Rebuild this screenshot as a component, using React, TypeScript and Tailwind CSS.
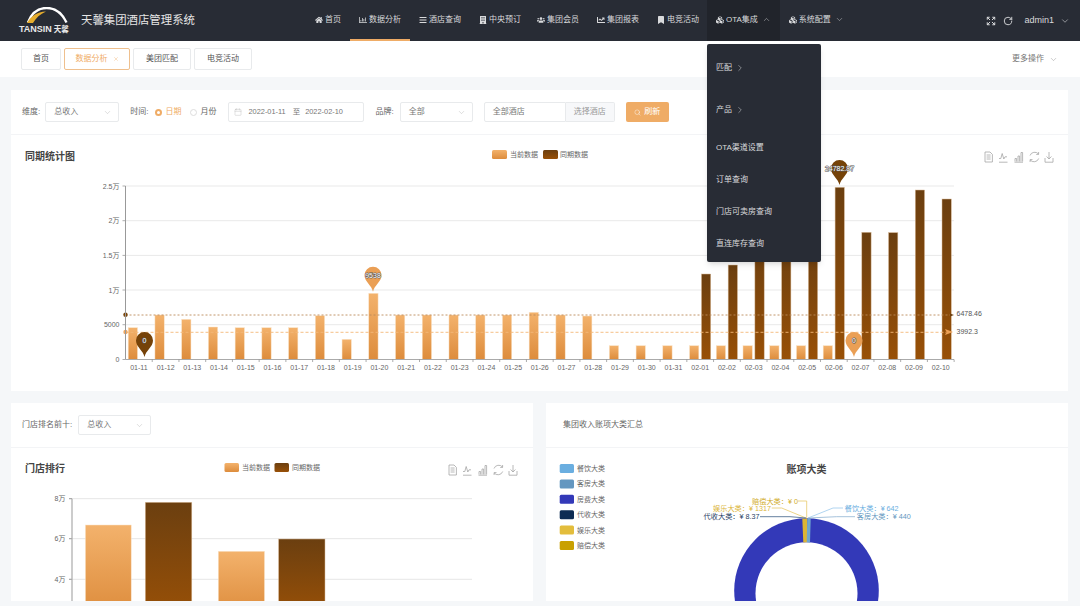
import React from "react";
import { ChevronDown, ChevronRight, ChevronUp, Search, Calendar, Expand, RotateCw, X } from "lucide-react";
import { FaHome, FaBars, FaBuilding, FaUsers, FaBookmark, FaCubes, FaRegChartBar, FaChartLine } from "react-icons/fa";

const navItems = [
  { label: "首页", icon: <FaHome />, pr: "pr-[9px]" },
  { label: "数据分析", icon: <FaRegChartBar />, active: true, pr: "pr-[9px]" },
  { label: "酒店查询", icon: <FaBars />, pr: "pr-[9px]" },
  { label: "中央预订", icon: <FaBuilding />, pr: "pr-[7px]" },
  { label: "集团会员", icon: <FaUsers />, pr: "pr-[9px]" },
  { label: "集团报表", icon: <FaChartLine />, pr: "pr-[9px]" },
  { label: "电竞活动", icon: <FaBookmark />, pr: "pr-[8px]" },
  { label: "OTA集成", icon: <FaCubes />, open: true, pr: "pr-[9px]" },
  { label: "系统配置", icon: <FaCubes />, caret: true, pr: "pr-[9px]" },
];

const days = [
  "01-11", "01-12", "01-13", "01-14", "01-15", "01-16", "01-17", "01-18", "01-19", "01-20", "01-21",
  "01-22", "01-23", "01-24", "01-25", "01-26", "01-27", "01-28", "01-29", "01-30", "01-31", "02-01",
  "02-02", "02-03", "02-04", "02-05", "02-06", "02-07", "02-08", "02-09", "02-10",
];

// y position of each bar top, in page pixels
const currentTops = [327.7, 315, 319.3, 327, 327.7, 327.7, 327.7, 315.7, 339.3, 293.3, 315, 315, 315, 315, 315, 312.3, 315, 316, 345.7, 345.7, 345.7, 345.7, 345.7, 345.7, 345.7, 345.7, 345.7];
const lastTops: Record<number, number> = { 21: 274, 22: 265, 23: 240, 24: 240, 25: 240, 26: 187.3, 27: 232.3, 28: 232.6, 29: 190, 30: 199 };

const axisLeft = 125.5;
const step = 26.73;
const baseY = 359.5;

const Select = ({ value, className }: { value: string; className: string }) => (
  <div className={`flex h-[20px] items-center justify-between rounded-[2px] border border-[#e8eaec] bg-white pl-[8px] pr-[6px] text-[#777] ${className}`}>
    <span>{value}</span>
    <ChevronDown size={9} strokeWidth={1} className="text-[#aaa]" />
  </div>
);

const Tools = ({ x, y }: { x: number; y: number }) => (
  <g transform={`translate(${x} ${y})`} fill="none" stroke="#a6a6a6" strokeWidth="0.8">
    <path d="M0 -5h5l2.4 2.4V5H0zM1.6 -2h4M1.6 0h4M1.6 2h4" />
    <path d="M14 5.2h8.5M14 1.5h1.8l1.4 -5 1.6 5.5 1.2 -2.2h2" />
    <path d="M29.5 5.2h8.5M30 4.5v-3h1.6v3M33 4.5v-5.5h1.6v5.5M36 4.5v-9h1.6v9" />
    <path d="M45 -1.5a5 5 0 0 1 8.6 -1.4M53.7 1.5a5 5 0 0 1 -8.6 1.4M53.6 -5v2.4h-2.4M45.1 5v-2.4h2.4" />
    <path d="M60 1v4.2h8V1M64 -5v7M61.6 -0.5 64 2l2.4 -2.5" />
  </g>
);

const Pin = ({ x, tip, fill, label }: { x: number; tip: number; fill: string; label: string }) => (
  <g>
    <path
      d={`M${x} ${tip}C${x - 1.2} ${tip - 6.5} ${x - 8.5} ${tip - 10} ${x - 8.5} ${tip - 16.5}a8.5 8.5 0 0 1 17 0C${x + 8.5} ${tip - 10} ${x + 1.2} ${tip - 6.5} ${x} ${tip}z`}
      fill={fill}
    />
    <text x={x} y={tip - 14} textAnchor="middle" fontSize="7" fill="#fff" stroke="#555" strokeWidth="1" paintOrder="stroke">
      {label}
    </text>
  </g>
);

const Gradients = () => (
  <defs>
    <linearGradient id="cur" x1="0" y1="0" x2="0" y2="1">
      <stop offset="0" stopColor="#f3b26c" />
      <stop offset="1" stopColor="#dd8c3c" />
    </linearGradient>
    <linearGradient id="last" x1="0" y1="0" x2="0" y2="1">
      <stop offset="0" stopColor="#6b3f10" />
      <stop offset="1" stopColor="#985007" />
    </linearGradient>
  </defs>
);

const TrendChart = () => (
  <svg viewBox="11 135 1057 256" className="block h-[256px] w-[1057px]">
    <Gradients />
    <text x="25" y="160" fontSize="10" fontWeight="700" fill="#444">同期统计图</text>

    <rect x="492" y="150" width="15" height="9" rx="1.5" fill="url(#cur)" />
    <text x="510" y="157" fontSize="7" fill="#666">当前数据</text>
    <rect x="543" y="150" width="15" height="9" rx="1.5" fill="url(#last)" />
    <text x="560" y="157" fontSize="7" fill="#666">同期数据</text>
    <Tools x={985} y={157} />

    {[186, 220.7, 255.4, 290, 324.7].map((y) => (
      <line key={y} x1={axisLeft} x2="954" y1={y} y2={y} stroke="#e9e9e9" strokeWidth="1" />
    ))}
    {[
      ["2.5万", 186],
      ["2万", 220.7],
      ["1.5万", 255.4],
      ["1万", 290],
      ["5000", 324.7],
      ["0", 359.5],
    ].map(([t, y]) => (
      <g key={t}>
        <line x1="122.5" x2={axisLeft} y1={y} y2={y} stroke="#999" strokeWidth="0.8" />
        <text x="119.5" y={Number(y) + 2.5} textAnchor="end" fontSize="7" fill="#666">{t}</text>
      </g>
    ))}

    {currentTops.map((top, i) => (
      <rect key={i} x={axisLeft + step * i + 2.7} y={top} width="9.3" height={baseY - top} fill="url(#cur)" stroke="#fae3c8" strokeWidth="0.5" />
    ))}
    {Object.entries(lastTops).map(([i, top]) => (
      <rect key={i} x={axisLeft + step * Number(i) + 14.6} y={top} width="9.3" height={baseY - top} fill="url(#last)" stroke="#d9bc9c" strokeWidth="0.5" />
    ))}

    <line x1={axisLeft} x2="950" y1="315" y2="315" stroke="#bb8a5a" strokeWidth="0.9" strokeDasharray="2 2" />
    <line x1={axisLeft} x2="946" y1="332.3" y2="332.3" stroke="#f4b878" strokeWidth="0.9" strokeDasharray="3 2" />
    <circle cx={axisLeft} cy="314.7" r="2.2" fill="#7a4509" />
    <circle cx={axisLeft} cy="332" r="2.2" fill="#f0a860" />
    <path d="M950 313.5l4 1.5 -4 1.5z" fill="#6b3f10" />
    <path d="M945 329l8 3 -8 3 1.5 -3z" fill="#eca055" />
    <text x="956.5" y="316" fontSize="7" fill="#555">6478.46</text>
    <text x="956.5" y="333.5" fontSize="7" fill="#555">3992.3</text>

    <line x1={axisLeft} x2={axisLeft} y1="186" y2={baseY} stroke="#999" strokeWidth="1" />
    <line x1={axisLeft} x2="954" y1={baseY} y2={baseY} stroke="#aaa" strokeWidth="1" />
    {days.map((d, i) => (
      <g key={d}>
        <line x1={axisLeft + step * (i + 1)} x2={axisLeft + step * (i + 1)} y1={baseY} y2="362" stroke="#888" strokeWidth="0.7" />
        <text x={axisLeft + step * i + step / 2} y="370" textAnchor="middle" fontSize="7" fill="#666">{d}</text>
      </g>
    ))}

    <Pin x={144.5} tip={357} fill="#754208" label="0" />
    <Pin x={373} tip={291.7} fill="#ea9f55" label="9538" />
    <Pin x={839.5} tip={185} fill="#754208" label="24782.87" />
    <Pin x={854} tip={357} fill="#ea9f55" label="0" />
  </svg>
);

const RankChart = () => (
  <svg viewBox="11 448 522 153" className="block h-[153px] w-[522px]">
    <Gradients />
    <text x="25" y="472" fontSize="10" fontWeight="700" fill="#444">门店排行</text>
    <rect x="224.5" y="463" width="14.5" height="9" rx="1.5" fill="url(#cur)" />
    <text x="242" y="470" fontSize="7" fill="#666">当前数据</text>
    <rect x="274.5" y="463" width="14.5" height="9" rx="1.5" fill="url(#last)" />
    <text x="292" y="470" fontSize="7" fill="#666">同期数据</text>
    <Tools x={449} y={470} />
    {[
      ["8万", 498.7],
      ["6万", 538.7],
      ["4万", 579.3],
    ].map(([t, y]) => (
      <g key={t}>
        <line x1="69" x2="472" y1={y} y2={y} stroke="#e6e6e6" strokeWidth="1" />
        <line x1="69" x2="72" y1={y} y2={y} stroke="#888" strokeWidth="0.8" />
        <text x="65.5" y={Number(y) + 2.5} textAnchor="end" fontSize="7" fill="#666">{t}</text>
      </g>
    ))}
    <line x1="72" x2="72" y1="498.7" y2="601" stroke="#aaa" strokeWidth="1.2" />
    <rect x="85.4" y="525" width="45.8" height="90" fill="url(#cur)" stroke="#fae3c8" strokeWidth="0.5" />
    <rect x="145.3" y="502.3" width="46.5" height="112" fill="url(#last)" stroke="#d9bc9c" strokeWidth="0.5" />
    <rect x="218.3" y="551.3" width="46.2" height="64" fill="url(#cur)" stroke="#fae3c8" strokeWidth="0.5" />
    <rect x="278.6" y="539" width="46.4" height="76" fill="url(#last)" stroke="#d9bc9c" strokeWidth="0.5" />
  </svg>
);

const legend = [
  ["餐饮大类", "#6aaee0"],
  ["客房大类", "#6497c0"],
  ["房费大类", "#3339b8"],
  ["代收大类", "#0d2c54"],
  ["娱乐大类", "#e3bd3c"],
  ["赔偿大类", "#c9a000"],
];

const DonutChart = () => (
  <svg viewBox="546 448 522 153" className="block h-[153px] w-[522px]">
    {legend.map(([t, c], i) => (
      <g key={t}>
        <rect x="559.7" y={464 + i * 15.4} width="14.3" height="9" rx="1.5" fill={c} />
        <text x="577" y={471 + i * 15.4} fontSize="7" fill="#666">{t}</text>
      </g>
    ))}
    <text x="806.5" y="473" textAnchor="middle" fontSize="10" fontWeight="700" fill="#444">账项大类</text>

    <circle cx="806.5" cy="590.6" r="72.3" fill="#3339b8" />
    <circle cx="806.5" cy="593.3" r="51" fill="#fff" />
    <path d="M802.3 518.6L807.3 518.4V542.3L803.3 542.6z" fill="#dcb535" />
    <path d="M807.3 518.4L810.7 518.6L810 542.6L806.7 542.3z" fill="#6fa8cf" />

    <path d="M798 501H806.7V518" fill="none" stroke="#e7c96b" strokeWidth="0.8" />
    <path d="M771.7 508H781.7L806 518" fill="none" stroke="#e7c96b" strokeWidth="0.8" />
    <path d="M760 516.7H790L806 518" fill="none" stroke="#3e5f86" strokeWidth="0.8" />
    <path d="M843 508H833L808 518" fill="none" stroke="#9cc9ec" strokeWidth="0.8" />
    <path d="M855 516.7H836.7L808 518" fill="none" stroke="#8fb3d2" strokeWidth="0.8" />

    <text x="752" y="503.5" fontSize="7.2" fill="#d1ac2a">赔偿大类：¥ 0</text>
    <text x="713" y="511" fontSize="7.2" fill="#dbb53a">娱乐大类：¥ 1317</text>
    <text x="703.6" y="519.2" fontSize="7.2" fill="#1f3d63">代收大类：¥ 8.37</text>
    <text x="844.7" y="511" fontSize="7.2" fill="#6aaee0">餐饮大类：¥ 642</text>
    <text x="856.8" y="519.2" fontSize="7.2" fill="#6497c0">客房大类：¥ 440</text>
  </svg>
);

const App: React.FC = () => {
  return (
    <div className="relative h-[606px] w-[1080px] overflow-hidden bg-[#f5f7f9] text-[8px] text-[#666] [font-family:'Liberation_Sans','Noto_Sans_CJK_SC',sans-serif]">
      {/* Header */}
      <header className="flex h-[41px] items-stretch bg-[#282c35] text-[#d9dadc]">
        <div className="flex w-[306px] items-center pl-[19px]">
          <div className="relative h-[28px] w-[53px]">
            <svg viewBox="0 0 53 20" className="absolute left-0 top-0 h-[20px] w-[53px]">
              <path d="M9 15.5C13 5 20 1 27.7 1C36 1 43 6 47.5 15.5" fill="none" stroke="#fff" strokeWidth="2.4" />
              <path d="M8 16C12 9 18 5 27 4.5C21 7 17 11 14 16z" fill="#e6ad2e" />
            </svg>
            <div className="absolute bottom-[1px] left-0 flex items-baseline gap-[2px] whitespace-nowrap leading-none text-[#e8e8e8]">
              <span className="text-[9px] font-bold">TANSIN</span>
              <span className="text-[7.5px] font-bold">天馨</span>
            </div>
          </div>
          <span className="ml-[9px] whitespace-nowrap text-[11.4px] text-[#e6e6e6]">天馨集团酒店管理系统</span>
        </div>
        <nav className="flex items-stretch">
          {navItems.map((n) => (
            <div
              key={n.label}
              className={`flex items-center gap-[2px] whitespace-nowrap border-b-2 pl-[9px] ${n.pr} ${n.active ? "border-[#efac66]" : "border-transparent"} ${n.open ? "bg-[#21242b]" : ""}`}
            >
              <span className="flex w-[8px] justify-center text-[8px]">{n.icon}</span>
              <span>{n.label}</span>
              {n.open && <ChevronUp size={9} strokeWidth={1.2} className="ml-[2px]" />}
              {n.caret && <ChevronDown size={9} strokeWidth={1.2} className="ml-[2px]" />}
            </div>
          ))}
        </nav>
        <div className="ml-auto flex items-center pr-[10px]">
          <Expand size={10} strokeWidth={2.4} />
          <RotateCw size={10} strokeWidth={2.2} className="ml-[7px]" />
          <span className="ml-[11px] text-[9px]">admin1</span>
          <ChevronDown size={10} strokeWidth={1.4} className="ml-[6px]" />
        </div>
      </header>

      {/* Open OTA menu */}
      <div className="absolute left-[707px] top-[44px] z-10 w-[114px] rounded-[2px] bg-[#282c35] pb-[2px] pt-[3px] text-[#d9dadc] shadow-md">
        <div className="flex h-[42px] items-center gap-[3px] pl-[9px]">匹配<ChevronRight size={10} strokeWidth={1.2} /></div>
        <div className="flex h-[42px] items-center gap-[3px] pl-[9px]">产品<ChevronRight size={10} strokeWidth={1.2} /></div>
        <div className="mt-[1px] flex h-[32px] items-center pl-[9px]">OTA渠道设置</div>
        <div className="flex h-[32px] items-center pl-[9px]">订单查询</div>
        <div className="flex h-[32px] items-center pl-[9px]">门店可卖房查询</div>
        <div className="flex h-[32px] items-center pl-[9px]">直连库存查询</div>
      </div>

      {/* Tabs */}
      <div className="flex h-[36px] items-center bg-white pl-[21px] pr-[22px] text-[#555]">
        <div className="flex h-[22px] w-[40px] items-center justify-center rounded-[2px] border border-[#e8eaec]">首页</div>
        <div className="ml-[3px] flex h-[22px] w-[66px] items-center justify-center gap-[5px] rounded-[2px] border border-[#efc08e] text-[#efac66]">
          数据分析
          <X size={6} strokeWidth={1.5} />
        </div>
        <div className="ml-[3px] flex h-[22px] w-[58px] items-center justify-center rounded-[2px] border border-[#e8eaec]">美团匹配</div>
        <div className="ml-[3px] flex h-[22px] w-[58px] items-center justify-center rounded-[2px] border border-[#e8eaec]">电竞活动</div>
        <div className="ml-auto flex items-center gap-[5px] text-[#777]">
          更多操作
          <ChevronDown size={9} strokeWidth={1} />
        </div>
      </div>

      <main className="pl-[11px] pr-[12px] pt-[13px]">
        {/* Filters + trend chart */}
        <section className="h-[301px] bg-white">
          <div className="flex h-[45px] items-center border-b border-[#f3f4f6] pl-[11px]">
            <span>维度:</span>
            <Select value="总收入" className="ml-[5px] w-[74px]" />
            <span className="ml-[11px]">时间:</span>
            <span className="ml-[7px] h-[7px] w-[7px] rounded-full border-2 border-[#efac66]" />
            <span className="ml-[3px] text-[#efac66]">日期</span>
            <span className="ml-[9px] h-[7px] w-[7px] rounded-full border border-[#ddd]" />
            <span className="ml-[3px]">月份</span>
            <div className="ml-[12px] flex h-[20px] w-[136px] items-center rounded-[2px] border border-[#e8eaec] pl-[5px] text-[7.4px] text-[#777]">
              <Calendar size={8} strokeWidth={1} className="text-[#aaa]" />
              <span className="ml-[6px]">2022-01-11</span>
              <span className="ml-[7px]">至</span>
              <span className="ml-[5px]">2022-02-10</span>
            </div>
            <span className="ml-[11px]">品牌:</span>
            <Select value="全部" className="ml-[6px] w-[73px]" />
            <div className="ml-[11px] flex h-[20px] w-[82px] items-center rounded-l-[2px] border border-[#e8eaec] pl-[8px] text-[#777]">全部酒店</div>
            <div className="flex h-[20px] w-[49px] items-center justify-center rounded-r-[2px] border border-l-0 border-[#e8eaec] bg-[#f7f8fa] text-[#999]">选择酒店</div>
            <div className="ml-[11px] flex h-[20px] w-[43px] items-center justify-center gap-[3px] rounded-[2px] bg-[#efac66] text-white">
              <Search size={7} strokeWidth={1.5} />
              刷新
            </div>
          </div>
          <TrendChart />
        </section>

        {/* Bottom cards */}
        <div className="mt-[12px] grid grid-cols-2 gap-[13px]">
          <section className="h-[198px] overflow-hidden bg-white">
            <div className="flex h-[45px] items-center border-b border-[#f3f4f6] pl-[11px]">
              <span>门店排名前十:</span>
              <Select value="总收入" className="ml-[6px] w-[73px]" />
            </div>
            <RankChart />
          </section>
          <section className="h-[198px] overflow-hidden bg-white">
            <div className="flex h-[45px] items-center border-b border-[#f3f4f6] pl-[17px]">集团收入账项大类汇总</div>
            <DonutChart />
          </section>
        </div>
      </main>
    </div>
  );
};

export default App;
